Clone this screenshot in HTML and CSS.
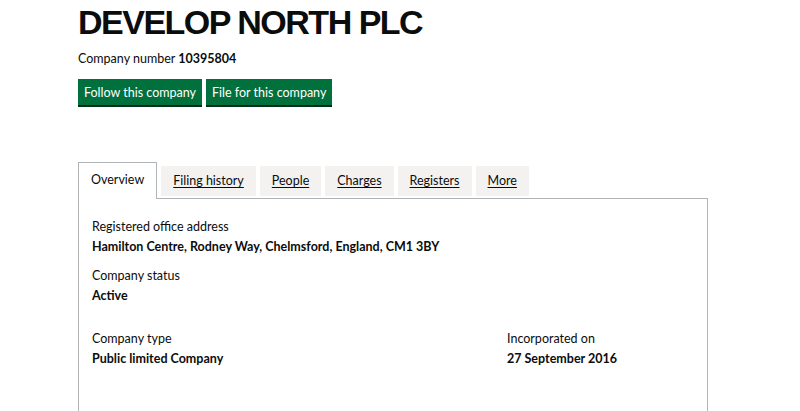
FILE: index.html
```html
<!DOCTYPE html>
<html lang="en">
<head>
<meta charset="utf-8">
<title>DEVELOP NORTH PLC</title>
<link rel="stylesheet" href="styles.css">
</head>
<body>
<main class="page">
  <h1 class="title">DEVELOP NORTH PLC</h1>
  <p class="company-number">Company number <strong>10395804</strong></p>
  <div class="actions">
    <a class="button" href="#">Follow this company</a>
    <a class="button" href="#">File for this company</a>
  </div>
  <nav class="tabs">
    <span class="tab tab-selected">Overview</span>
    <a class="tab" href="#">Filing history</a>
    <a class="tab" href="#">People</a>
    <a class="tab" href="#">Charges</a>
    <a class="tab" href="#">Registers</a>
    <a class="tab" href="#">More</a>
  </nav>
  <section class="panel">
    <dl class="field">
      <dt>Registered office address</dt>
      <dd>Hamilton Centre, Rodney Way, Chelmsford, England, CM1 3BY</dd>
    </dl>
    <dl class="field">
      <dt>Company status</dt>
      <dd>Active</dd>
    </dl>
    <div class="row">
      <dl class="field">
        <dt>Company type</dt>
        <dd>Public limited Company</dd>
      </dl>
      <dl class="field">
        <dt>Incorporated on</dt>
        <dd>27 September 2016</dd>
      </dl>
    </div>
  </section>
</main>
</body>
</html>
```
FILE: styles.css
```css
html, body {
  margin: 0;
  padding: 0;
  background: #ffffff;
}
body {
  font-family: Lato, "Noto Sans", "Liberation Sans", sans-serif;
  color: #0b0c0c;
  overflow: hidden;
  height: 411px;
}
.page {
  padding: 0 92px 0 78px;
}
.title {
  font-family: "Liberation Sans", Arial, sans-serif;
  font-weight: 700;
  font-size: 34px;
  letter-spacing: -1.5px;
  line-height: 44px;
  margin: 0;
  color: #0b0c0c;
}
.company-number {
  font-size: 12.5px;
  line-height: 18px;
  margin: 6px 0 0 0;
}
.company-number strong {
  font-weight: 700;
}
.actions {
  display: flex;
  gap: 4px;
  margin-top: 11px;
}
.button {
  display: block;
  background: #00703c;
  color: #ffffff;
  text-decoration: none;
  font-size: 12.5px;
  line-height: 18px;
  padding: 5px 6px 3px 6px;
  box-shadow: 0 2px 0 #002d18;
}
.tabs {
  display: flex;
  gap: 4px;
  align-items: flex-end;
  margin-top: 57px;
}
.tab {
  display: block;
  background: #f3f2f1;
  color: #0b0c0c;
  font-size: 12.5px;
  line-height: 18px;
  padding: 6px 12px 6px 12px;
  text-decoration: underline;
  text-underline-offset: 2px;
  margin-bottom: 2px;
}
.tab-selected {
  background: #ffffff;
  text-decoration: none;
  border: 1px solid #b1b4b6;
  border-bottom: 0;
  padding: 8px 12px 10px 12px;
  margin-bottom: -1px;
  position: relative;
}
.panel {
  border: 1px solid #b1b4b6;
  border-bottom: 0;
  padding: 19px 13px 0 13px;
  height: 220px;
}
.field {
  margin: 0 0 11px 0;
}
.field dt {
  font-size: 12.5px;
  line-height: 18px;
}
.field dd {
  margin: 2px 0 0 0;
  font-size: 12.5px;
  line-height: 18px;
  font-weight: 700;
}
.row {
  display: grid;
  grid-template-columns: 415px 1fr;
  margin-top: 25px;
}
```
